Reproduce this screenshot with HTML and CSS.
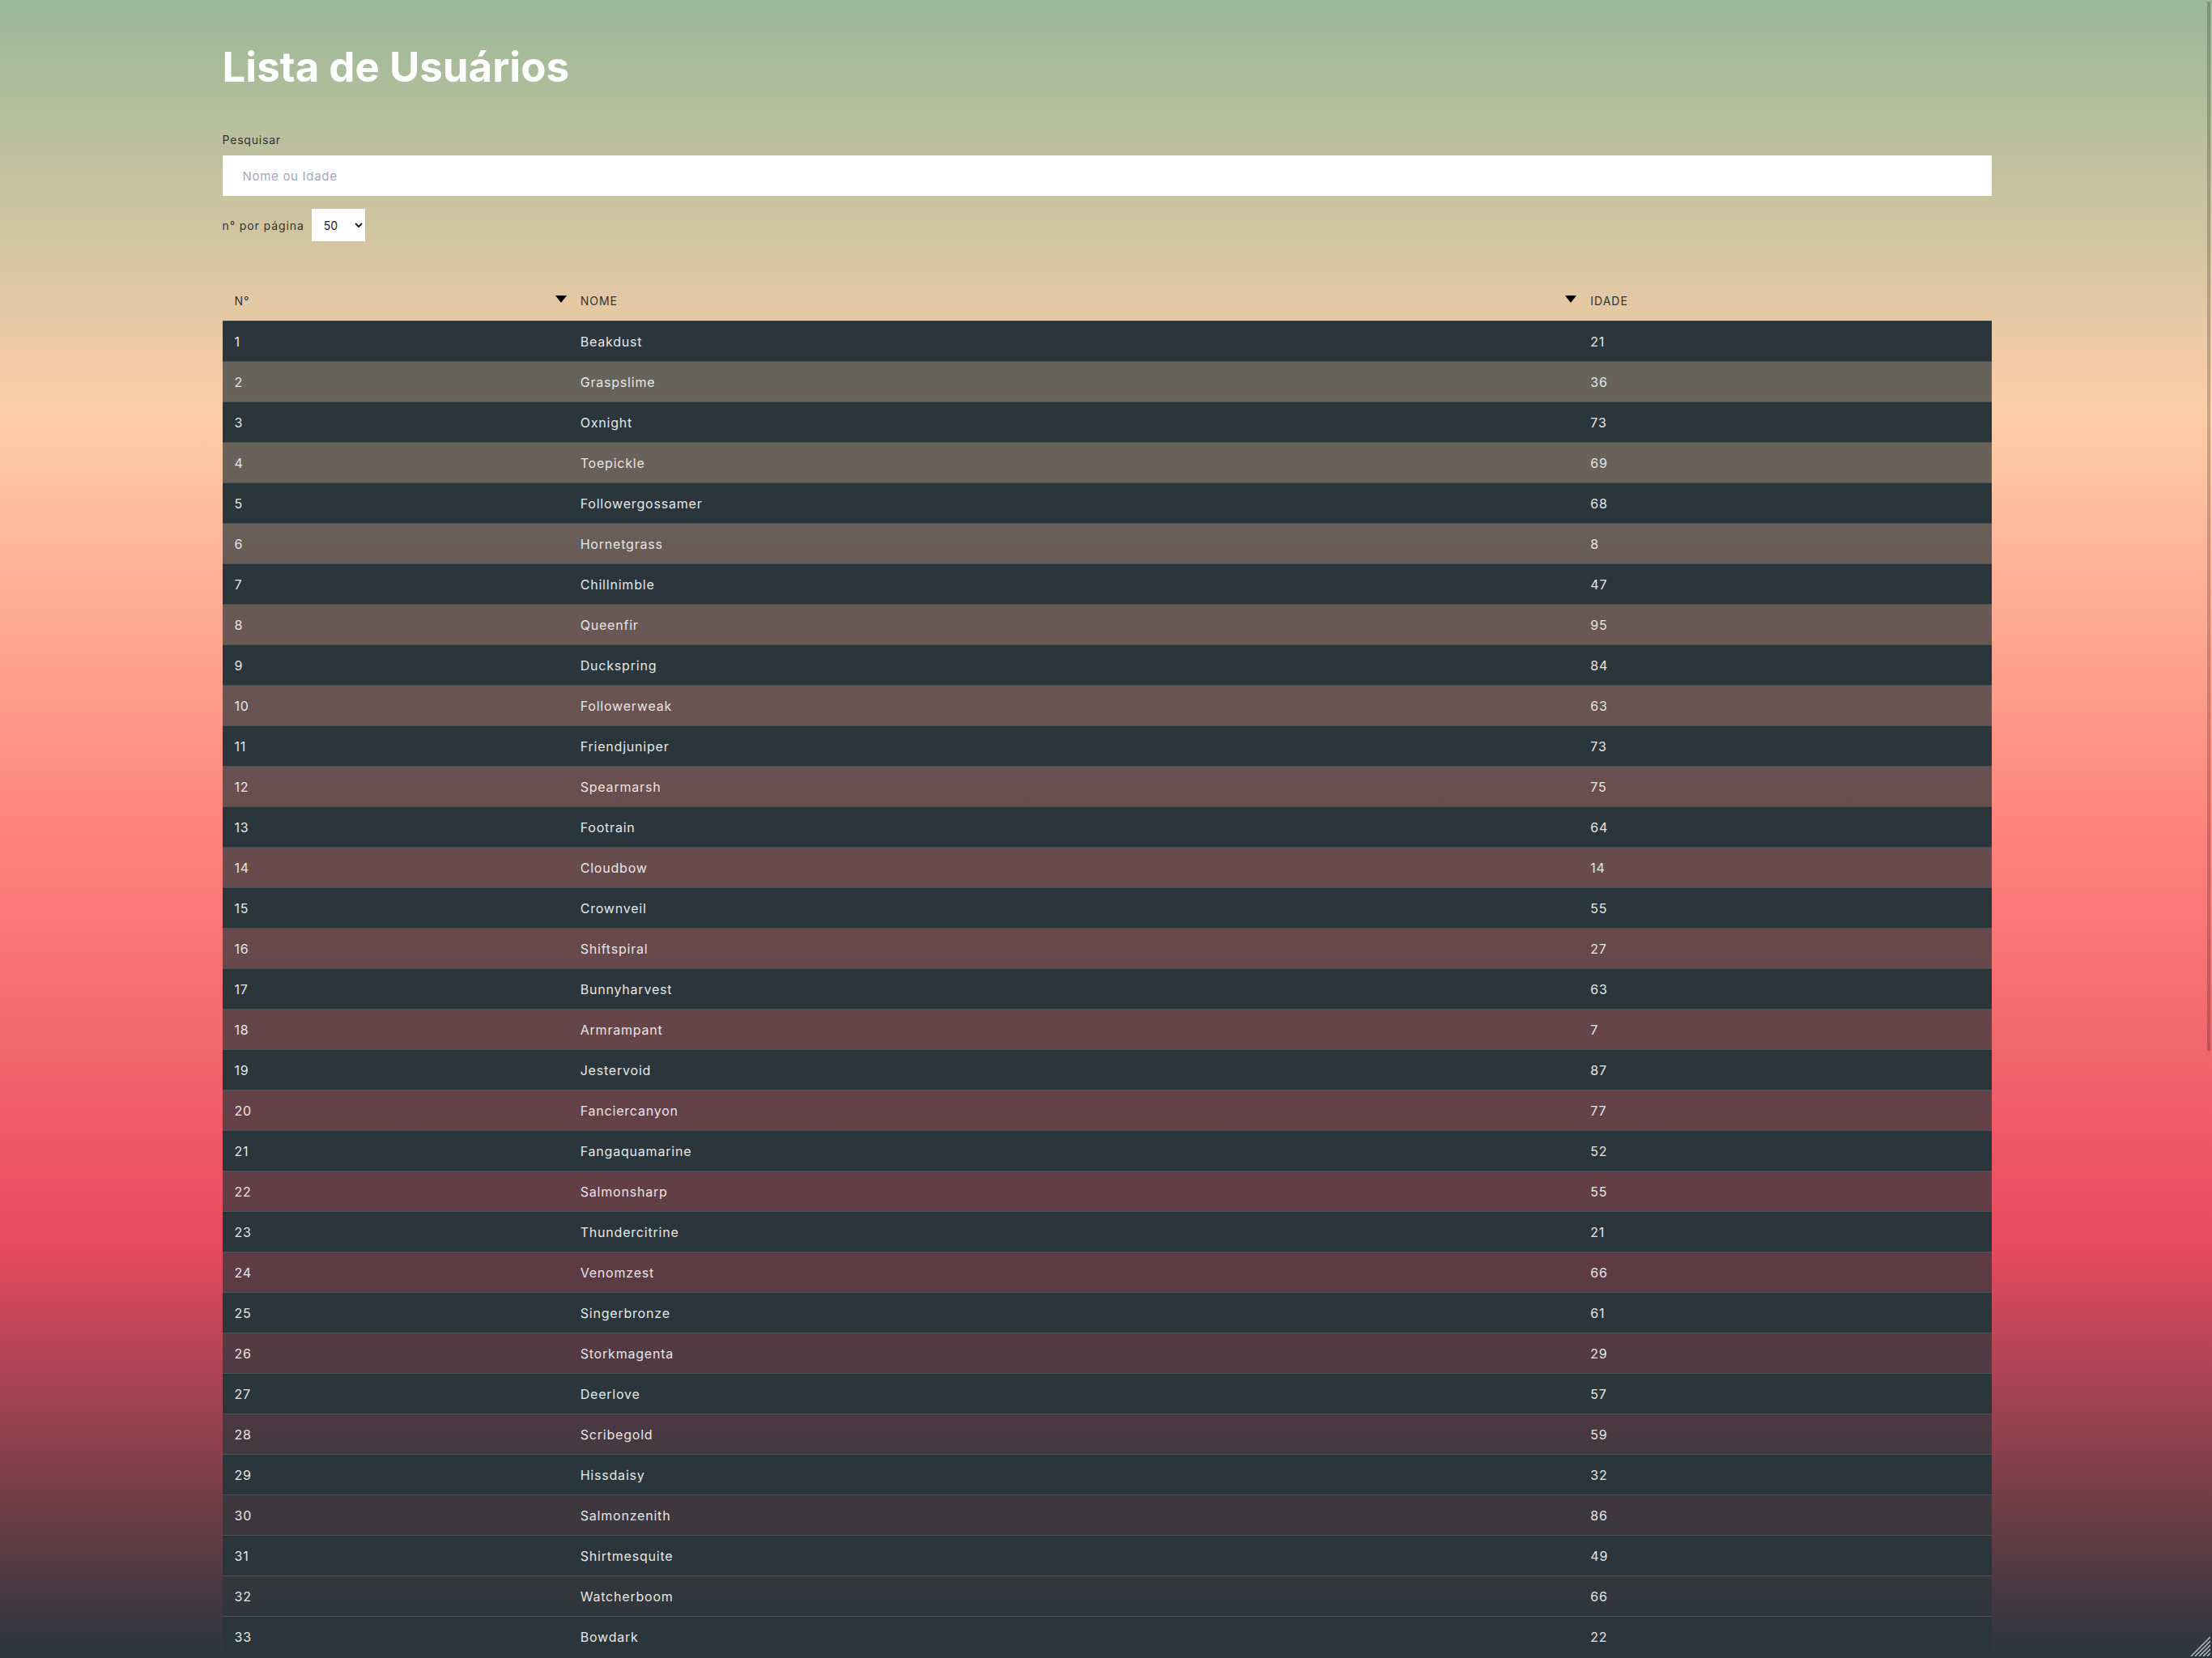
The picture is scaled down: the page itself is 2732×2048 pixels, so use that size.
FILE: index.html
```html
<!DOCTYPE html>
<html lang="pt-BR">
<head>
<meta charset="utf-8">
<title>Lista de Usuários</title>
<link rel="stylesheet" href="styles.css">
</head>
<body>
<div class="screen">
  <main class="container">
    <h1 class="title">Lista de Usuários</h1>
    <label class="field-label" for="search">Pesquisar</label>
    <input class="search" id="search" type="text" placeholder="Nome ou Idade">
    <div class="per-page">
      <span class="per-page-label">n° por página</span>
      <select class="per-page-select"><option>50</option></select>
    </div>
    <table class="users">
      <colgroup>
        <col class="col-num">
        <col class="col-name">
        <col class="col-age">
      </colgroup>
      <thead>
        <tr>
          <th>N°</th>
          <th class="sortable">NOME</th>
          <th class="sortable">IDADE</th>
        </tr>
      </thead>
      <tbody>
        <tr><td>1</td><td>Beakdust</td><td>21</td></tr>
        <tr><td>2</td><td>Graspslime</td><td>36</td></tr>
        <tr><td>3</td><td>Oxnight</td><td>73</td></tr>
        <tr><td>4</td><td>Toepickle</td><td>69</td></tr>
        <tr><td>5</td><td>Followergossamer</td><td>68</td></tr>
        <tr><td>6</td><td>Hornetgrass</td><td>8</td></tr>
        <tr><td>7</td><td>Chillnimble</td><td>47</td></tr>
        <tr><td>8</td><td>Queenfir</td><td>95</td></tr>
        <tr><td>9</td><td>Duckspring</td><td>84</td></tr>
        <tr><td>10</td><td>Followerweak</td><td>63</td></tr>
        <tr><td>11</td><td>Friendjuniper</td><td>73</td></tr>
        <tr><td>12</td><td>Spearmarsh</td><td>75</td></tr>
        <tr><td>13</td><td>Footrain</td><td>64</td></tr>
        <tr><td>14</td><td>Cloudbow</td><td>14</td></tr>
        <tr><td>15</td><td>Crownveil</td><td>55</td></tr>
        <tr><td>16</td><td>Shiftspiral</td><td>27</td></tr>
        <tr><td>17</td><td>Bunnyharvest</td><td>63</td></tr>
        <tr><td>18</td><td>Armrampant</td><td>7</td></tr>
        <tr><td>19</td><td>Jestervoid</td><td>87</td></tr>
        <tr><td>20</td><td>Fanciercanyon</td><td>77</td></tr>
        <tr><td>21</td><td>Fangaquamarine</td><td>52</td></tr>
        <tr><td>22</td><td>Salmonsharp</td><td>55</td></tr>
        <tr><td>23</td><td>Thundercitrine</td><td>21</td></tr>
        <tr><td>24</td><td>Venomzest</td><td>66</td></tr>
        <tr><td>25</td><td>Singerbronze</td><td>61</td></tr>
        <tr><td>26</td><td>Storkmagenta</td><td>29</td></tr>
        <tr><td>27</td><td>Deerlove</td><td>57</td></tr>
        <tr><td>28</td><td>Scribegold</td><td>59</td></tr>
        <tr><td>29</td><td>Hissdaisy</td><td>32</td></tr>
        <tr><td>30</td><td>Salmonzenith</td><td>86</td></tr>
        <tr><td>31</td><td>Shirtmesquite</td><td>49</td></tr>
        <tr><td>32</td><td>Watcherboom</td><td>66</td></tr>
        <tr><td>33</td><td>Bowdark</td><td>22</td></tr>
      </tbody>
    </table>
  </main>
  <div class="scroll-thumb" aria-hidden="true"></div>
  <svg class="resizer" width="26" height="26" viewBox="0 0 26 26" aria-hidden="true">
    <g stroke="#c4c4c4" stroke-width="1.4">
      <line x1="2" y1="26" x2="26" y2="2"/>
      <line x1="7" y1="26" x2="26" y2="7"/>
      <line x1="12" y1="26" x2="26" y2="12"/>
      <line x1="17" y1="26" x2="26" y2="17"/>
      <line x1="22" y1="26" x2="26" y2="22"/>
    </g>
  </svg>
</div>
</body>
</html>
```
FILE: styles.css
```css
html, body {
  margin: 0;
  padding: 0;
  height: 100%;
}

body {
  font-family: Inter, "DejaVu Sans", sans-serif;
  color: #333;
}

.screen {
  height: 100vh;
  overflow-y: auto;
  scrollbar-width: none;
  background: linear-gradient(to bottom, #99b898 0%, #fecea8 25%, #ff847c 50%, #e84a5f 75%, #2a363b 100%);
}

.screen::-webkit-scrollbar {
  display: none;
}

.container {
  width: 2185px;
  margin: 0 auto;
  padding: 52px 0 40px 2px;
}

.title {
  margin: 0 0 49px;
  font-size: 51px;
  line-height: 62px;
  font-weight: 700;
  color: #fff;
}

.field-label {
  display: block;
  font-size: 14px;
  line-height: 20px;
  letter-spacing: 0.8px;
  color: #333;
  margin-bottom: 9px;
}

.search {
  display: block;
  box-sizing: border-box;
  width: 100%;
  height: 50px;
  border: none;
  outline: none;
  background: #fff;
  padding: 0 25px;
  font-family: inherit;
  font-size: 15px;
  letter-spacing: 0.7px;
  color: #333;
}

.search::placeholder {
  color: #a3a9bd;
}

.per-page {
  display: flex;
  align-items: center;
  gap: 9px;
  margin-top: 16px;
  font-size: 14px;
  letter-spacing: 0.9px;
  color: #333;
}

.per-page-select {
  box-sizing: border-box;
  width: 66px;
  height: 40px;
  border: none;
  border-radius: 0;
  background: #fff;
  padding: 0 8px 0 11px;
  font-family: inherit;
  font-size: 14px;
  color: #222;
}

.users {
  width: 100%;
  margin-top: 48px;
  table-layout: fixed;
  border-collapse: separate;
  border-spacing: 0;
}

.col-num { width: 19.55%; }
.col-name { width: 57.1%; }
.col-age { width: 23.35%; }

.users th {
  position: relative;
  height: 50px;
  padding: 0 15px;
  text-align: left;
  font-size: 14px;
  font-weight: 400;
  letter-spacing: 1px;
  color: #333;
}

.users th.sortable::before {
  content: "";
  position: absolute;
  left: -16px;
  top: 19px;
  border-left: 7.5px solid transparent;
  border-right: 7.5px solid transparent;
  border-top: 9px solid #000;
}

.users td {
  box-sizing: border-box;
  height: 50px;
  padding: 0 15px;
  border-top: 1px solid #4a5050;
  font-size: 16px;
  letter-spacing: 0.8px;
  color: #e6e6e6;
}

.users tbody tr:nth-child(odd) {
  background: #2a363b;
}

.users tbody tr:nth-child(even) {
  background: rgba(42, 54, 59, 0.7);
}

.scroll-thumb {
  position: fixed;
  top: 2px;
  right: 2px;
  width: 4px;
  height: 1296px;
  background: rgba(0, 0, 0, 0.2);
}

.resizer {
  position: fixed;
  right: 2px;
  bottom: 2px;
}
```
